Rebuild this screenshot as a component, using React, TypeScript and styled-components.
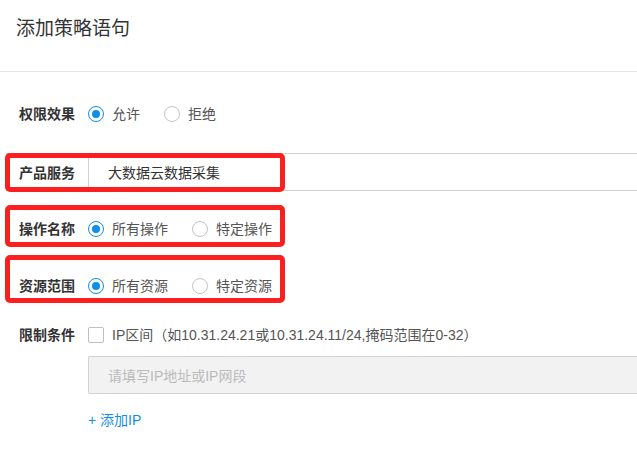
import styled, { createGlobalStyle, css } from 'styled-components'

const GlobalStyle = createGlobalStyle`
  html, body {
    margin: 0;
    padding: 0;
    background: #fff;
  }
  body {
    font-family: 'Liberation Sans', 'Noto Sans CJK SC', sans-serif;
    font-size: 14px;
    color: #555;
  }
`

const Page = styled.div`
  width: 637px;
  height: 460px;
  overflow: hidden;
  background: #fff;
`

const Header = styled.div`
  height: 72px;
  box-sizing: border-box;
  border-bottom: 1px solid #e6e6e6;
  padding: 17px 0 0 16px;
`

const Title = styled.h2`
  margin: 0;
  font-size: 19px;
  line-height: 24px;
  font-weight: normal;
  color: #333;
`

const Form = styled.div`
  display: flex;
  flex-direction: column;
  padding-top: 24px;
`

type RowProps = {
  $top?: number
  $align?: 'center' | 'flex-start'
  $mark?: { top: number; height: number }
}

const Row = styled.div<RowProps>`
  position: relative;
  display: flex;
  align-items: ${p => p.$align ?? 'center'};
  min-height: 36px;
  padding-left: 19px;
  margin-top: ${p => p.$top ?? 0}px;

  ${p =>
    p.$mark &&
    css`
      &::after {
        content: '';
        position: absolute;
        left: 5px;
        width: 280px;
        top: ${p.$mark.top}px;
        height: ${p.$mark.height}px;
        box-sizing: border-box;
        border: 5px solid #fc1f1f;
        border-radius: 5px;
        pointer-events: none;
      }
    `}
`

const Label = styled.span`
  width: 69px;
  flex: none;
  font-weight: bold;
  color: #333;
  line-height: 20px;
`

const Options = styled.div`
  display: flex;
  align-items: center;
`

const Option = styled.label`
  display: flex;
  align-items: center;
  margin-right: 24px;
  line-height: 20px;
  color: #555;
  cursor: pointer;
`

const RadioDot = styled.span<{ $checked?: boolean }>`
  width: 16px;
  height: 16px;
  box-sizing: border-box;
  border-radius: 50%;
  border: 1.5px solid ${p => (p.$checked ? '#108ee9' : '#c4c4c4')};
  margin-right: 8px;
  display: flex;
  align-items: center;
  justify-content: center;

  &::after {
    content: '';
    width: 8px;
    height: 8px;
    border-radius: 50%;
    background: ${p => (p.$checked ? '#108ee9' : 'transparent')};
  }
`

const InputGroup = styled.div`
  display: flex;
  flex: 1;
  height: 38px;
  margin-left: -13px;
  border: 1px solid #d0d0d0;
  border-right: none;
  box-sizing: border-box;
`

const Addon = styled.span`
  display: flex;
  align-items: center;
  padding-left: 12px;
  width: 82px;
  box-sizing: border-box;
  border-right: 1px solid #d0d0d0;
  font-weight: bold;
  color: #333;
`

const GroupValue = styled.span`
  display: flex;
  align-items: center;
  padding-left: 19px;
  color: #333;
`

const Content = styled.div`
  display: flex;
  flex-direction: column;
  flex: 1;
`

const CheckLine = styled.label`
  display: flex;
  align-items: center;
  line-height: 20px;
  color: #555;
`

const Checkbox = styled.span`
  width: 16px;
  height: 16px;
  box-sizing: border-box;
  border: 1px solid #bfbfbf;
  border-radius: 2px;
  margin-right: 8px;
  flex: none;
`

const DisabledInput = styled.div`
  margin-top: 11px;
  height: 38px;
  box-sizing: border-box;
  border: 1px solid #d2d2d2;
  border-right: none;
  border-radius: 2px 0 0 2px;
  background: #f2f2f2;
  color: #bbb;
  display: flex;
  align-items: center;
  padding-left: 19px;
`

const AddLink = styled.a`
  margin-top: 16px;
  line-height: 20px;
  color: #108ee9;
  text-decoration: none;
  cursor: pointer;
`

type RadioItem = { text: string; checked?: boolean }

const RadioGroup = ({ items }: { items: RadioItem[] }) => (
  <Options>
    {items.map(item => (
      <Option key={item.text}>
        <RadioDot $checked={item.checked} />
        {item.text}
      </Option>
    ))}
  </Options>
)

export default function App() {
  return (
    <Page>
      <GlobalStyle />
      <Header>
        <Title>添加策略语句</Title>
      </Header>
      <Form>
        <Row>
          <Label>权限效果</Label>
          <RadioGroup items={[{ text: '允许', checked: true }, { text: '拒绝' }]} />
        </Row>
        <Row $top={21} $mark={{ top: 0, height: 39 }}>
          <InputGroup>
            <Addon>产品服务</Addon>
            <GroupValue>大数据云数据采集</GroupValue>
          </InputGroup>
        </Row>
        <Row $top={20} $mark={{ top: -6, height: 42 }}>
          <Label>操作名称</Label>
          <RadioGroup items={[{ text: '所有操作', checked: true }, { text: '特定操作' }]} />
        </Row>
        <Row $top={21} $mark={{ top: -13, height: 48 }}>
          <Label>资源范围</Label>
          <RadioGroup items={[{ text: '所有资源', checked: true }, { text: '特定资源' }]} />
        </Row>
        <Row $top={21} $align="flex-start">
          <Label>限制条件</Label>
          <Content>
            <CheckLine>
              <Checkbox />
              IP区间（如10.31.24.21或10.31.24.11/24,掩码范围在0-32）
            </CheckLine>
            <DisabledInput>请填写IP地址或IP网段</DisabledInput>
            <AddLink>+ 添加IP</AddLink>
          </Content>
        </Row>
      </Form>
    </Page>
  )
}
